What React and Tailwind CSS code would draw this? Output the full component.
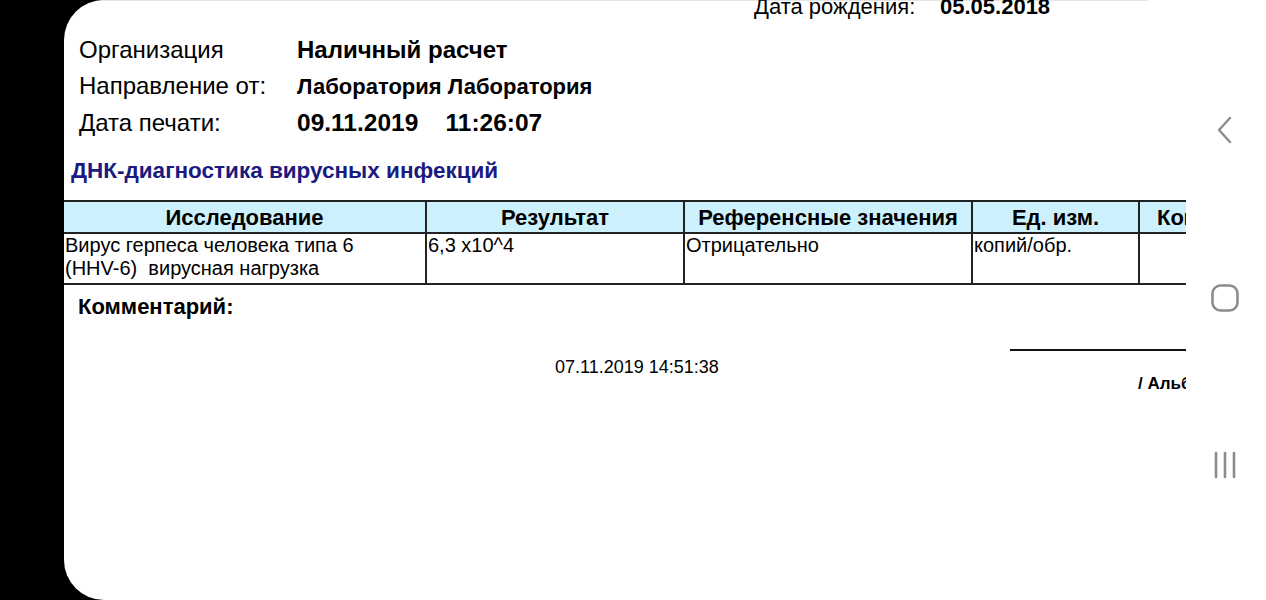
export default function App() {
  const cols = [
    { w: 'w-[363px]', title: 'Исследование' },
    { w: 'w-[258px]', title: 'Результат' },
    { w: 'w-[288px]', title: 'Референсные значения' },
    { w: 'w-[167px]', title: 'Ед. изм.' },
    { w: 'w-[200px]', title: 'Комментарий' },
  ]
  const row = ['Вирус герпеса человека типа 6\n(HHV-6)  вирусная нагрузка', '6,3 x10^4', 'Отрицательно', 'копий/обр.', '']

  return (
    <div className="w-[1266px] h-[600px] flex bg-black overflow-hidden font-['Liberation_Sans',Arial,sans-serif] text-black">
      <div className="w-[64px] shrink-0" />
      <div className="flex-1 flex bg-white rounded-l-[40px] overflow-hidden">
        {/* document */}
        <div className="w-[1122px] shrink-0 overflow-hidden">
          <div className="h-px bg-[#e4e4e4] ml-[36px] w-[1048px]" />
          <div className="-mt-[6px] pl-[690px] h-[24px] flex items-center text-[22px] leading-[24px] whitespace-nowrap">
            <span className="w-[186px]">Дата рождения:</span>
            <span className="font-bold">05.05.2018</span>
          </div>

          <div className="pl-[15px] mt-[13px] text-[24px] whitespace-nowrap">
            <div className="flex items-center h-[36px]">
              <span className="w-[218px]">Организация</span>
              <span className="font-bold">Наличный расчет</span>
            </div>
            <div className="flex items-center h-[36px]">
              <span className="w-[218px]">Направление от:</span>
              <span className="font-bold text-[22px]">Лаборатория Лаборатория</span>
            </div>
            <div className="flex items-center h-[38px]">
              <span className="w-[218px]">Дата печати:</span>
              <span className="font-bold text-[24.5px]">09.11.2019&nbsp;&nbsp;&nbsp;&nbsp;11:26:07</span>
            </div>
          </div>

          <div className="pl-[7px] mt-[14px] h-[30px] flex items-center text-[22.5px] font-bold text-[#1a1a80] whitespace-nowrap">
            ДНК-диагностика вирусных инфекций
          </div>

          <div className="mt-[14px] flex w-[1276px] border-t-2 border-[#222]">
            {cols.map((c, i) => (
              <div key={i} className={`${c.w} shrink-0 ${i < cols.length - 1 ? 'border-r-2' : ''} border-[#222]`}>
                <div className={`h-[32px] bg-[#cdf1fc] border-b-2 border-[#222] flex items-center text-[22px] font-bold whitespace-nowrap ${i < cols.length - 1 ? 'justify-center' : 'pl-[17px]'}`}>
                  {c.title}
                </div>
                <div className="h-[51px] border-b-2 border-[#222] text-[20px] leading-[23px] pl-[1px] whitespace-pre">
                  {row[i]}
                </div>
              </div>
            ))}
          </div>

          <div className="pl-[14px] mt-[9px] h-[24px] flex items-center text-[22px] font-bold">
            Комментарий:
          </div>

          <div className="flex mt-[31px]">
            <div className="pt-[7px] pl-[491px] w-[946px] shrink-0 text-[18px] leading-[22px] whitespace-nowrap">
              07.11.2019 14:51:38
            </div>
            <div className="w-[200px] shrink-0">
              <div className="h-[2px] bg-[#111]" />
              <div className="mt-[22px] pl-[128px] text-[17px] leading-[22px] font-bold whitespace-nowrap">/ Альберт</div>
            </div>
          </div>
        </div>

        {/* navigation bar */}
        <div className="flex-1 flex flex-col items-center text-[#8c8c8c]">
          <svg className="mt-[116px] ml-[-2px]" width="20" height="28" viewBox="0 0 20 28" fill="none" stroke="currentColor" strokeWidth="2.4" strokeLinecap="round" strokeLinejoin="round">
            <path d="M15 2 L4 14 L15 26" />
          </svg>
          <svg className="mt-[139px] ml-[-2px]" width="30" height="30" viewBox="0 0 30 30" fill="none" stroke="currentColor" strokeWidth="2.6">
            <rect x="2.5" y="2.5" width="25" height="25" rx="8" />
          </svg>
          <svg className="mt-[138px] ml-[-2px]" width="26" height="28" viewBox="0 0 26 28" fill="none" stroke="currentColor" strokeWidth="2.6" strokeLinecap="round">
            <path d="M4 2 V26 M13 2 V26 M22 2 V26" />
          </svg>
        </div>
      </div>
    </div>
  )
}
